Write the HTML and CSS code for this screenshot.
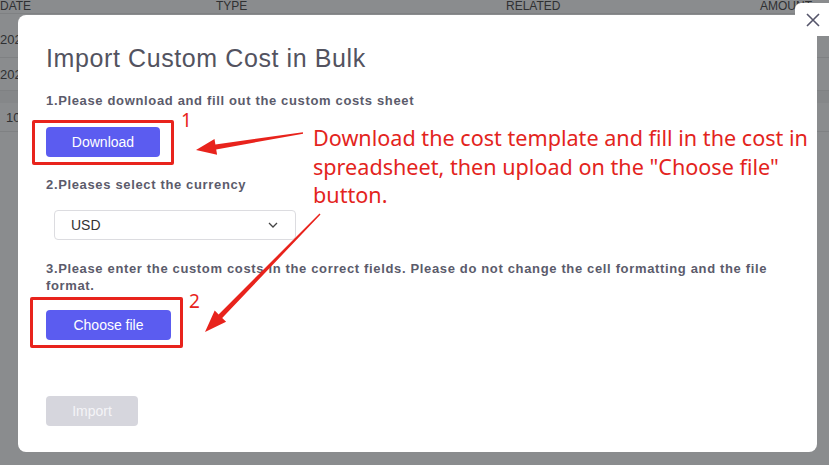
FILE: index.html
```html
<!DOCTYPE html>
<html lang="en">
<head>
    <meta charset="UTF-8">
    <meta name="viewport" content="width=device-width, initial-scale=1.0">
    <title>Import Custom Cost in Bulk</title>
    <link rel="stylesheet" href="styles.css">
</head>
<body>
    <div class="page">
        <div class="table-head">
            <span class="col col-date">DATE</span>
            <span class="col col-type">TYPE</span>
            <span class="col col-related">RELATED</span>
            <span class="col col-amount">AMOUNT</span>
        </div>
        <div class="table-row row-tall"><span class="col col-date">202</span></div>
        <div class="table-row"><span class="col col-date">202</span></div>
        <div class="table-gap"></div>
        <div class="table-row row-pager"><span class="col pager">10</span></div>
    </div>

    <div class="modal">
        <h1 class="modal-title">Import Custom Cost in Bulk</h1>

        <p class="step step-1">1.Please download and fill out the custom costs sheet</p>
        <button class="btn btn-primary btn-download">Download</button>

        <p class="step step-2">2.Pleases select the currency</p>
        <div class="select">
            <span>USD</span>
            <svg class="chevron" width="10" height="6" viewBox="0 0 10 6"><path d="M1 1l4 4 4-4" fill="none" stroke="#444" stroke-width="1.3"/></svg>
        </div>

        <p class="step step-3">3.Please enter the custom costs in the correct fields. Please do not change the cell formatting and the file format.</p>
        <button class="btn btn-primary btn-choose">Choose file</button>

        <button class="btn btn-disabled">Import</button>

        <!-- annotations drawn on top of the screenshot -->
        <div class="mark mark-1"></div>
        <div class="mark mark-2"></div>
        <span class="mark-num num-1">1</span>
        <span class="mark-num num-2">2</span>
        <p class="note">Download the cost template and fill in the cost in<br>spreadsheet, then upload on the "Choose file"<br>button.</p>
    </div>

    <button class="close" aria-label="Close">
        <svg width="16" height="16" viewBox="0 0 16 16"><path d="M2 2l12 12M14 2L2 14" stroke="#55556a" stroke-width="1.6" fill="none"/></svg>
    </button>

    <svg class="arrows" width="829" height="465" viewBox="0 0 829 465">
        <polygon fill="#e8231c" points="303.1,133.7 216.2,149.4 217.1,154.8 196,150 214.5,139 215.4,144.4 302.9,132.3"/>
        <polygon fill="#e8231c" points="320.5,214.5 222.2,318 226.1,321.8 205,332 214.7,310.6 218.6,314.5 319.5,213.5"/>
    </svg>
</body>
</html>
```

FILE: styles.css
```css
html, body { margin: 0; padding: 0; }
body { width: 829px; height: 465px; overflow: hidden; background-color: #8a8c8e; font-family: "Liberation Sans", Arial, sans-serif; position: relative; }

.page { color: #2f3032; font-size: 12px; }
.table-head, .table-row { display: flex; align-items: center; border-bottom: 1px solid #7f8183; }
.table-head { height: 13px; line-height: 12px; }
.table-head .col { position: relative; top: -1px; }
.table-row { height: 32px; font-size: 13px; }
.row-tall { height: 44px; padding-top: 8px; box-sizing: border-box; }
.table-gap { height: 12px; background-color: #858789; }
.row-pager { height: 28px; }
.col { white-space: nowrap; }
.col-date { width: 216px; }
.col-type { width: 290px; }
.col-related { width: 254px; }
.pager { margin-left: 6px; }

.modal { position: absolute; left: 18px; top: 15px; width: 799px; height: 437px; box-sizing: border-box; padding: 28px 28px 0; background-color: #fff; border-radius: 8px; display: flex; flex-direction: column; align-items: flex-start; color: #55556a; }
.modal-title { margin: 0; font-size: 25px; line-height: 30px; font-weight: normal; letter-spacing: 0.6px; color: #53535f; }
.step { margin: 0; font-size: 13px; font-weight: bold; line-height: 17px; letter-spacing: 0.65px; color: #5b5b6b; }
.step-1 { margin-top: 19px; }
.step-2 { margin-top: 19px; }
.step-3 { margin-top: 20px; }

.btn { border: none; border-radius: 4px; height: 30px; font-family: inherit; font-size: 14px; color: #fff; padding: 0; }
.btn-primary { background-color: #5b5cf0; }
.btn-download { width: 114px; margin-top: 18px; }
.btn-choose { width: 125px; margin-top: 16px; }
.btn-disabled { width: 92px; margin-top: 56px; background-color: #d6d6dd; color: #f4f4f7; }

.select { margin: 17px 0 0 8px; width: 242px; height: 30px; box-sizing: border-box; border: 1px solid #dcdce0; border-radius: 4px; display: flex; align-items: center; justify-content: space-between; padding: 0 17px 0 16px; font-size: 14px; color: #333; }

.mark { position: absolute; border: 3px solid #e8231c; border-radius: 2px; box-sizing: border-box; }
.mark-1 { left: 14px; top: 105px; width: 142px; height: 45px; }
.mark-2 { left: 12px; top: 282px; width: 153px; height: 51px; }
.mark-num { position: absolute; color: #e8231c; font-family: "Noto Sans", sans-serif; font-size: 19px; line-height: 16px; }
.num-1 { left: 163px; top: 97px; }
.num-2 { left: 171px; top: 278px; }
.note { position: absolute; left: 295px; top: 109px; margin: 0; color: #e3241d; font-family: "Noto Sans", sans-serif; font-size: 21.6px; line-height: 28.5px; white-space: nowrap; }

.close { position: absolute; left: 795px; top: 3px; width: 40px; height: 33px; border: none; border-radius: 6px; background-color: #fff; padding: 0; display: flex; align-items: center; justify-content: flex-start; }
.close svg { margin-left: 10px; }

.arrows { position: absolute; left: 0; top: 0; pointer-events: none; }
```
